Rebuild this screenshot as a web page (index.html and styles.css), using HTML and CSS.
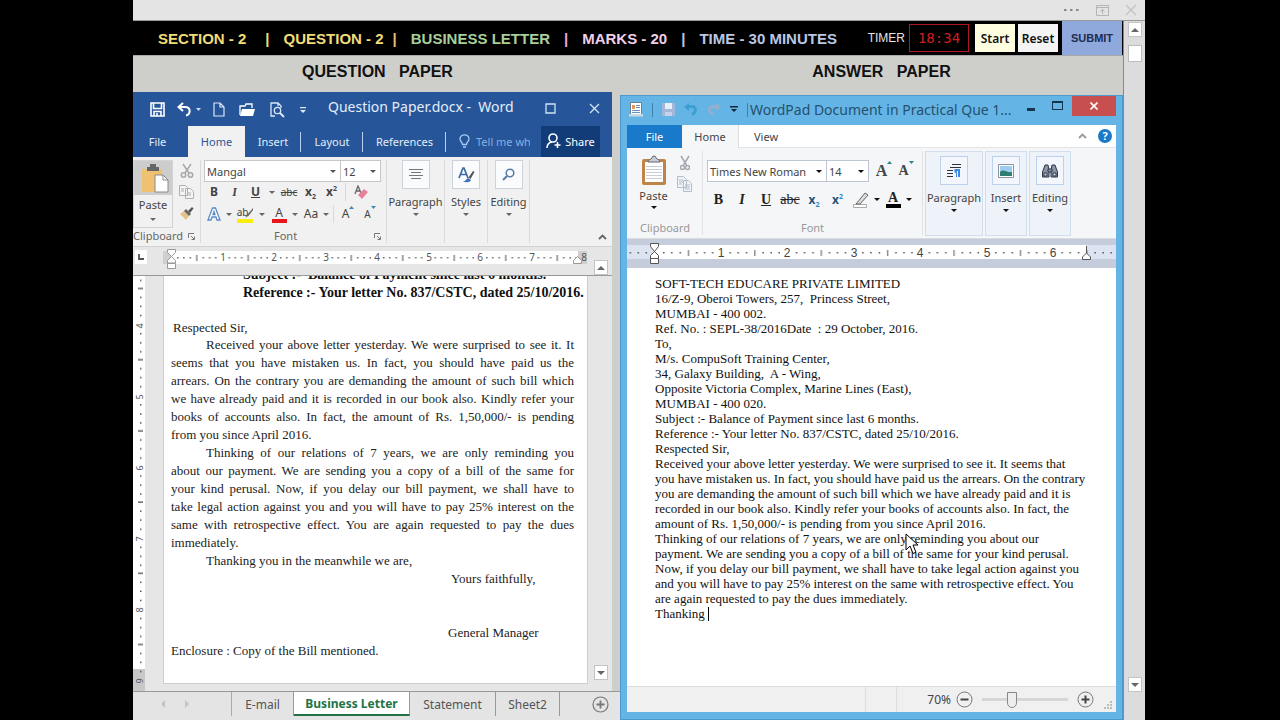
FILE: index.html
```html
<!DOCTYPE html>
<html lang="en">
<head>
<meta charset="utf-8">
<title>Question Paper and Answer Paper</title>
<link rel="stylesheet" href="styles.css">
</head>
<body>
<svg class="defs" width="0" height="0" aria-hidden="true">
  <defs>
    <pattern id="wordTicks" x="0" y="0" width="51.5" height="13" patternUnits="userSpaceOnUse">
      <path d="M6 6h1.5v1.5h-1.5zM12 6h1.5v1.5h-1.5zM18.5 6h1.5v1.5h-1.5zM31.5 6h1.5v1.5h-1.5zM38 6h1.5v1.5h-1.5zM44 6h1.5v1.5h-1.5z" fill="#666"/>
      <path d="M25 4h1.5v6h-1.5z" fill="#888"/>
    </pattern>
    <pattern id="sideTicks" x="0" y="48" width="12" height="71.2" patternUnits="userSpaceOnUse">
      <path d="M7 9h1.5v1.5h-1.5zM7 18h1.5v1.5h-1.5zM7 27h1.5v1.5h-1.5zM7 44h1.5v1.5h-1.5zM7 53h1.5v1.5h-1.5zM7 62h1.5v1.5h-1.5z" fill="#555"/>
      <path d="M5 35h5v1.5h-5z" fill="#666"/>
    </pattern>
    <pattern id="padTicks" x="28" y="0" width="66.4" height="13" patternUnits="userSpaceOnUse">
      <path d="M8 6h1.5v1.5h-1.5zM16 6h1.5v1.5h-1.5zM24.500 6h1.500v1.500h-1.500zM41 6h1.500v1.500h-1.500zM49 6h1.500v1.500h-1.500zM57 6h1.500v1.500h-1.500z" fill="#555"/>
      <path d="M33 4h1v6h-1z" fill="#555"/>
    </pattern>
  </defs>
</svg>
<div class="stage">
  <div class="topstrip">
    <svg width="16" height="4" viewBox="0 0 16 4"><path d="M0 1h2.500v2h-2.500zM6 1h2.500v2h-2.500zM12 1h2.500v2h-2.500z" fill="#888"/></svg>
    <svg width="13" height="11" viewBox="0 0 13 11" fill="none" stroke="#b5b5b5"><path d="M.5.5h12v10h-12zM.5 2.500h12M6.500 9V4.500M4.500 6.500l2-2 2 2"/></svg>
    <svg width="12" height="12" viewBox="0 0 12 12" fill="none" stroke="#c2c2c2" stroke-width="1.300"><path d="M1 1l10 10M11 1L1 11"/></svg>
  </div>
  <div class="shell">
    <main class="exam">
      <header class="exambar">
        <div class="facts">
          <span class="yellow">SECTION - 2</span><span class="yellow wide">|</span>
          <span class="yellow">QUESTION - 2</span><span class="orange near">|</span>
          <span class="green">BUSINESS LETTER</span><span class="pink">|</span>
          <span class="rose">MARKS - 20</span><span class="steel">|</span>
          <span class="steel">TIME - 30 MINUTES</span>
        </div>
        <span class="timerlabel">TIMER</span>
        <output class="timer">18:34</output>
        <button class="start">Start</button>
        <button class="reset">Reset</button>
        <button class="submit">SUBMIT</button>
      </header>
      <div class="headings"><h2>QUESTION &nbsp; PAPER</h2><h2>ANSWER &nbsp; PAPER</h2></div>
      <div class="papers">
        <section class="left">
          <div class="word">
            <div class="wtitle">
              <div class="wquick">
                <button aria-label="Save"><svg width="15" height="15" viewBox="0 0 15 15" fill="none" stroke="#fff" stroke-width="1.600"><path d="M1 1h13v13H1zM3.500 1v5.500h8V1M4 14V9.500h7V14M7 11v3"/></svg></button>
                <button aria-label="Undo"><svg width="24" height="15" viewBox="0 0 24 15" fill="none" stroke="#fff" stroke-width="2"><path d="M6 1L1.500 5 6 9M2 5h6c6 0 6 7 1 8.500"/><path d="M19 6h5l-2.500 3z" fill="#cfdcf0" stroke="none"/></svg></button>
                <button aria-label="New"><svg width="12" height="15" viewBox="0 0 12 15" fill="none" stroke="#dbe8f8" stroke-width="1.200"><path d="M1 1h6l4 4v9H1zM7 1v4h4"/></svg></button>
                <button aria-label="Open"><svg width="17" height="14" viewBox="0 0 17 14"><path d="M1 12V3h5l1-2h6v4" fill="none" stroke="#fff" stroke-width="1.300"/><path d="M3 6h13l-2 7H1z" fill="#fff"/></svg></button>
                <button aria-label="Print preview"><svg width="15" height="16" viewBox="0 0 15 16" fill="none" stroke="#dbe8f8" stroke-width="1.300"><path d="M5 14H1V1h7l3 3v2M8 1v3"/><circle cx="7.500" cy="8.500" r="3.200"/><path d="M10 11l4 4" stroke-width="2"/></svg></button>
                <button aria-label="Customize"><svg width="6" height="8" viewBox="0 0 6 8" fill="#dbe8f8"><path d="M0 1h6v1.300H0zM0 4h6L3 7z"/></svg></button>
              </div>
              <span class="wname">Question Paper.docx - &nbsp;Word</span>
              <div class="wctl">
                <button aria-label="Maximize"><svg width="11" height="11" viewBox="0 0 11 11"><path d="M1 1h9v9H1z" fill="none" stroke="#cfe2f8" stroke-width="1.300"/></svg></button>
                <button aria-label="Close"><svg width="11" height="11" viewBox="0 0 11 11"><path d="M1 1l9 9M10 1l-9 9" stroke="#d5e4f5" stroke-width="1.300"/></svg></button>
              </div>
            </div>
            <nav class="wtabs">
              <button class="t1">File</button><button class="t2">Home</button><button class="t3">Insert</button><button class="t4">Layout</button><button class="t5">References</button>
              <label class="tell"><svg width="11" height="15" viewBox="0 0 11 15" fill="none" stroke="#a9cdf3" stroke-width="1.300"><path d="M3.500 10.500C3.500 8 1 7.500 1 5a4.500 4.200 0 0 1 9 0c0 2.500-2.500 3-2.500 5.500zM4 13h3"/></svg><input value="Tell me what you want to do" aria-label="Tell me"></label>
              <button class="share"><svg width="15" height="16" viewBox="0 0 15 16" fill="none" stroke="#fff" stroke-width="1.600"><circle cx="7" cy="5" r="4"/><path d="M1 15c0-3 2-5.500 5-6M11.500 9v6M8.500 12h6"/></svg>Share</button>
            </nav>
            <div class="wribbon">
              <div class="wgroup clip">
                <div class="cliprow">
                  <button class="wpaste"><span class="pastetop"><svg width="28" height="31" viewBox="0 0 28 31"><path d="M1 6h20v23H1z" fill="#eec271"/><path d="M6 4h3V1h6v3h3v4H6z" fill="#666"/><path d="M14 12h8l5 5v12H14z" fill="#fff" stroke="#8a8a8a"/><path d="M22 12v5h5" fill="none" stroke="#8a8a8a"/></svg></span><span>Paste</span><i class="car"></i></button>
                  <div class="clipcol">
                    <button aria-label="Cut"><svg width="14" height="15" viewBox="0 0 14 15" fill="none" stroke="#a8a8a8" stroke-width="1.500"><path d="M3 1l6 9M11 1L5 10"/><circle cx="3.500" cy="12" r="2.200"/><circle cx="10.500" cy="12" r="2.200"/></svg></button>
                    <button aria-label="Copy"><svg width="15" height="14" viewBox="0 0 15 14" fill="#f4f4f4" stroke="#b0b0b0"><path d="M.5.5h6l2 2v8h-8zM6.500 3.500h5l3 3v7h-8zM2 4h3M2 6h3M8 8h4M8 10h4"/></svg></button>
                    <button aria-label="Format painter"><svg width="15" height="14" viewBox="0 0 15 14"><path d="M1 8l4-3 5 5-3 4z" fill="#e6c388"/><path d="M5 5l2-2 5 5-2 2z" fill="#666"/><path d="M9 5l4-4 1.500 1.500L11 7z" fill="#555"/></svg></button>
                  </div>
                </div>
                <div class="glabel">Clipboard<svg width="7" height="7" viewBox="0 0 7 7" fill="none" stroke="#777"><path d="M.5 5V.5H6M3 3l3 3M6.500 3.500v3h-3"/></svg></div>
              </div>
              <div class="wgroup fontg">
                <div class="combos"><span class="combo grow"><select aria-label="Font"><option>Mangal</option></select></span><span class="combo size"><select aria-label="Font size"><option>12</option></select></span></div>
                <div class="tools">
                  <button class="w20"><b>B</b></button><button class="w21"><b><em class="ser">I</em></b></button><button class="w21"><b><u>U</u></b></button><i class="car w12"></i><button class="w22 small"><s>abc</s></button><button class="w21"><b>x<sub>2</sub></b></button><button class="w21"><b>x<sup>2</sup></b></button><i class="vbar"></i>
                  <button class="w24" aria-label="Clear formatting"><svg width="15" height="15" viewBox="0 0 15 15"><path d="M1 9L4 1l3 7M2 6h4" fill="none" stroke="#666" stroke-width="1.300"/><path d="M4 10l6-6 4 3-6 7z" fill="#e8829a"/></svg></button>
                </div>
                <div class="tools">
                  <button class="w20" aria-label="Text effects"><svg width="14" height="14" viewBox="0 0 14 14" fill="#fff" stroke="#5c8cc8" stroke-width="1.300"><path d="M1 13L5.500 1h3L13 13h-3l-1-3H5l-1 3zM6 7.500h2L7 4.500z"/></svg></button><i class="car w10"></i>
                  <button class="w22 hilite" aria-label="Highlight"><span>ab</span><svg width="9" height="11" viewBox="0 0 9 11"><path d="M9 1L3 8l-2 2.500L4.500 9 9 3z" fill="#666"/></svg></button><i class="car w12"></i>
                  <button class="w22 fcol" aria-label="Font color"><span>A</span></button><i class="car w10"></i><button class="w22">Aa</button><i class="car w8"></i><i class="vbar"></i>
                  <button class="w22">A<svg class="tip" width="5" height="3" viewBox="0 0 5 3"><path d="M0 3h5L2.500 0z" fill="#48a"/></svg></button><button class="w22 small">A<svg class="tip" width="5" height="3" viewBox="0 0 5 3"><path d="M0 0h5L2.500 3z" fill="#48a"/></svg></button>
                </div>
                <div class="glabel">Font<svg width="7" height="7" viewBox="0 0 7 7" fill="none" stroke="#777"><path d="M.5 5V.5H6M3 3l3 3M6.500 3.500v3h-3"/></svg></div>
              </div>
              <button class="wgroup big g58"><span class="ibox"><svg width="14" height="11" viewBox="0 0 14 11"><path d="M0 .5h14M2 3.500h10M0 6.500h14M2 9.500h10" stroke="#777"/></svg></span>Paragraph<i class="car"></i></button>
              <button class="wgroup big g43"><span class="ibox"><svg width="17" height="16" viewBox="0 0 17 16"><path d="M1 11L5 1h1l4 10M3 7.500h5" fill="none" stroke="#3c68a4" stroke-width="1.700"/><path d="M15 4l1.500 1-4 7-2-1.500z" fill="#555"/><path d="M10 11l3 2c-1 3-5 2-8 2 3-1 3-3 5-4z" fill="#3c72bc"/></svg></span>Styles<i class="car"></i></button>
              <button class="wgroup big g42"><span class="ibox"><svg width="13" height="13" viewBox="0 0 13 13" fill="none" stroke="#557aa8" stroke-width="1.500"><circle cx="8" cy="5" r="3.800"/><path d="M5 8l-4 4" stroke-width="2"/></svg></span>Editing<i class="car"></i></button>
              <button class="collapse" aria-label="Collapse ribbon"><svg width="9" height="6" viewBox="0 0 9 6"><path d="M1 5l3.500-3.500L8 5" fill="none" stroke="#666" stroke-width="1.800"/></svg></button>
            </div>
            <div class="wruler">
              <span class="tabsel"><svg width="6" height="6" viewBox="0 0 6 6"><path d="M1 0v5h5" fill="none" stroke="#555" stroke-width="1.800"/></svg></span>
              <svg class="wscale" height="28" role="img" aria-label="Ruler">
                <rect x="0" y="4" width="424" height="13" fill="#cfcfcf"/><rect x="8" y="4" width="407" height="13" fill="#fff"/>
                <svg x="8" y="4" width="405" height="13"><rect width="405" height="13" fill="url(#wordTicks)"/></svg>
                <g class="nums"><text x="60" y="14">1</text><text x="111" y="14">2</text><text x="163" y="14">3</text><text x="214" y="14">4</text><text x="266" y="14">5</text><text x="317" y="14">6</text><text x="369" y="14">7</text><text x="421" y="14">8</text></g>
                <path d="M4.500 2.500h8v3l-4 4-4-4zM4.500 16v-2.500l4-4 4 4V16zM4.500 16.500h8v5h-8zM410.500 16.500v-3l4-4 4 4v3z" fill="#fff" stroke="#999"/>
              </svg>
              <button class="sbtn up" aria-label="Scroll up"></button>
            </div>
            <div class="wbody">
              <svg class="side" width="12" role="img" aria-label="Vertical ruler"><rect width="12" height="100%" fill="#fff"/><rect y="393" width="12" height="24" fill="#c8c8c8"/><rect width="12" height="407" fill="url(#sideTicks)"/>
                <g class="nums vert"><text transform="translate(10 50) rotate(-90)">4</text><text transform="translate(10 121) rotate(-90)">5</text><text transform="translate(10 192) rotate(-90)">6</text><text transform="translate(10 263) rotate(-90)">7</text><text transform="translate(10 334) rotate(-90)">8</text><text transform="translate(10 405) rotate(-90)">9</text></g></svg>
              <article class="page">
                <p class="ref">Subject :- &nbsp;Balance of Payment since last 6 months.</p>
                <p class="ref">Reference :- Your letter No. 837/CSTC, dated 25/10/2016.</p>
                <p class="resp">Respected Sir,</p>
                <p class="para">Received your above letter yesterday. We were surprised to see it. It<br>seems that you have mistaken us. In fact, you should have paid us the<br>arrears. On the contrary you are demanding the amount of such bill which<br>we have already paid and it is recorded in our book also. Kindly refer your<br>books of accounts also. In fact, the amount of Rs. 1,50,000/- is pending<br><span class="last">from you since April 2016.</span></p>
                <p class="para">Thinking of our relations of 7 years, we are only reminding you<br>about our payment. We are sending you a copy of a bill of the same for<br>your kind perusal. Now, if you delay our bill payment, we shall have to<br>take legal action against you and you will have to pay 25% interest on the<br>same with retrospective effect. You are again requested to pay the dues<br><span class="last">immediately.</span></p>
                <p class="thanks">Thanking you in the meanwhile we are,</p>
                <p class="yours">Yours faithfully,</p>
                <p class="gm">General Manager</p>
                <p>Enclosure : Copy of the Bill mentioned.</p>
              </article>
              <div class="wscroll"><button class="sbtn down" aria-label="Scroll down"></button></div>
            </div>
          </div>
          <nav class="sheets">
            <span class="arrows"><button class="al" aria-label="Previous sheet"></button><button class="ar" aria-label="Next sheet"></button></span>
            <button class="s1">E-mail</button><button class="s2">Business Letter</button><button class="s3">Statement</button><button class="s4">Sheet2</button>
            <button class="plus" aria-label="New sheet"><svg width="17" height="17" viewBox="0 0 17 17" fill="none" stroke="#777"><circle cx="8.500" cy="8.500" r="7.500" stroke-width="1.200"/><path d="M8.500 4.500v8M4.500 8.500h8" stroke-width="1.800"/></svg></button>
          </nav>
        </section>
        <section class="pad">
          <div class="ptitle">
            <svg width="14" height="15" viewBox="0 0 14 15"><path d="M1.500.5h11v12h-11z" fill="#fff" stroke="#68829a"/><path d="M3 3h3v4H3z" fill="#e09a54"/><path d="M7 3.500h4M7 5.500h4M3 8.500h8M3 10.500h8" stroke="#6a90c0"/><path d="M0 12h14v2.500H0z" fill="#c9d9e4"/></svg>
            <i class="pline"></i>
            <button aria-label="Save"><svg width="13" height="14" viewBox="0 0 13 14"><path d="M0 0h13v13H0z" fill="#a4b7d6"/><path d="M3 0h7v6H3z" fill="#e8eefa"/><path d="M3 9h7v4H3z" fill="#c6d2e8"/></svg></button>
            <button aria-label="Undo"><svg width="14" height="13" viewBox="0 0 14 13" fill="none" stroke="#3b9fd4" stroke-width="3"><path d="M3 3.500h5c5 0 4 6 0 8"/><path d="M5 0v8L0 4z" fill="#3b9fd4" stroke="none"/></svg></button>
            <button aria-label="Redo"><svg width="14" height="13" viewBox="0 0 14 13" fill="none" stroke="#93afcd" stroke-width="3"><path d="M11 3.500H6c-5 0-4 6 0 8"/><path d="M9 0v8l5-4z" fill="#93afcd" stroke="none"/></svg></button>
            <button aria-label="Customize"><svg width="8" height="7" viewBox="0 0 8 7" fill="#10283c"><path d="M0 0h8v1.500H0zM1 3h6L4 6z"/></svg></button>
            <i class="pline"></i>
            <span class="pname">WordPad Document in Practical Que 1...</span>
            <button class="pmin" aria-label="Minimize"></button><button class="pmax" aria-label="Maximize"></button>
            <button class="pclose" aria-label="Close"><svg width="8" height="8" viewBox="0 0 8 8"><path d="M.5.5l7 7M7.500.5l-7 7" stroke="#fff" stroke-width="1.600"/></svg></button>
          </div>
          <div class="pinner">
            <nav class="ptabs"><button class="pfile">File</button><button class="phome">Home</button><button class="pview">View</button>
              <button class="pcol" aria-label="Collapse ribbon"><svg width="9" height="6" viewBox="0 0 9 6"><path d="M1 5l3.500-3.500L8 5" fill="none" stroke="#999" stroke-width="1.800"/></svg></button><button class="help">?</button></nav>
            <div class="pribbon">
              <div class="pclip">
                <div class="pcliprow">
                  <button class="ppaste"><svg width="26" height="31" viewBox="0 0 26 31"><rect x="1" y="4" width="24" height="26" rx="2" fill="#bd8547"/><path d="M4 7h18v20H4z" fill="#fff"/><path d="M5 11.500h16M5 14.500h16M5 17.500h16M5 20.500h16M5 23.500h16" stroke="#c7ccd6"/><path d="M7 7c0-3 3-2 4-4a2 2 0 0 1 4 0c1 2 4 1 4 4z" fill="#c8ced6" stroke="#667"/></svg><span>Paste</span><i class="car dark"></i></button>
                  <div class="pclipcol"><button aria-label="Cut"><svg width="10" height="16" viewBox="0 0 10 16" fill="none" stroke="#a5aab0" stroke-width="1.500"><path d="M1 1l5.500 9M9 1L3.500 10"/><circle cx="2.500" cy="12.500" r="2"/><circle cx="7.500" cy="12.500" r="2"/></svg></button><button aria-label="Copy"><svg width="15" height="16" viewBox="0 0 15 16" fill="#f0f3f8" stroke="#b4bccb"><path d="M.5.5h6l3 3v8h-9zM6.500 4.500h5l3 3v8h-8zM2 4h4M2 6h4M2 8h3M8 9h5M8 11h5M8 13h5"/></svg></button></div>
                </div>
                <div class="plabel">Clipboard</div>
              </div>
              <div class="pfont">
                <div class="combos"><span class="combo pf"><select aria-label="Font family"><option>Times New Roman</option></select></span><span class="combo ps"><select aria-label="Font size"><option>14</option></select></span>
                  <button class="ser w24 grown"><b>A</b><svg class="tip" width="5" height="3" viewBox="0 0 5 3"><path d="M0 3h5L2.500 0z" fill="#288"/></svg></button><button class="ser w20"><b>A</b><svg class="tip" width="5" height="3" viewBox="0 0 5 3"><path d="M0 0h5L2.500 3z" fill="#288"/></svg></button></div>
                <div class="tools ptools">
                  <button class="w23 ser"><b>B</b></button><button class="w24 ser"><b><em>I</em></b></button><button class="w24 ser"><b><u>U</u></b></button><button class="w24 ser"><s>abc</s></button><button class="w24 blue"><b>x<sub>2</sub></b></button><button class="w23 blue"><b>x<sup>2</sup></b></button>
                  <button class="w23" aria-label="Highlight"><svg width="16" height="16" viewBox="0 0 16 16"><path d="M.5 12.500h13v3H.5z" fill="#fff" stroke="#aaa"/><path d="M3 12L12 1l3 2-8 9z" fill="#ddd" stroke="#666"/></svg></button><i class="car dark w10"></i>
                  <button class="w22 fcol black ser" aria-label="Text color"><span><b>A</b></span></button><i class="car dark w10"></i>
                </div>
                <div class="plabel">Font</div>
              </div>
              <button class="pbig p57"><span class="ibox"><svg width="14" height="14" viewBox="0 0 14 14"><path d="M5 .5h9M3 3.500h11M0 6.500h6M0 9.500h6M0 12.500h6" stroke="#333"/><path d="M8 5h5v8h-2V7h-1v6H9v-4c-2 0-2-4-1-4z" fill="#3c8ae0"/></svg></span>Paragraph<i class="car dark"></i></button>
              <button class="pbig p41"><span class="ibox"><svg width="16" height="14" viewBox="0 0 16 14"><path d="M.5.5h15v13H.5z" fill="#fff" stroke="#8794a2"/><path d="M2 2h12v10H2z" fill="#9ccdf0"/><path d="M2 8c4-4 6 1 12 0v4H2z" fill="#2f7f70"/></svg></span>Insert<i class="car dark"></i></button>
              <button class="pbig p41"><span class="ibox"><svg width="16" height="14" viewBox="0 0 16 14" fill="#8a94a8" stroke="#2e3848"><path d="M3 1h3l1 5v7H.5V8zM13 1h-3L9 6v7h6.500V8z"/><path d="M6 5h4v3H6z"/><path d="M2 9h3v3H2zM11 9h3v3h-3z" fill="#d4dcea"/></svg></span>Editing<i class="car dark"></i></button>
            </div>
            <svg class="pruler" height="29" role="img" aria-label="Ruler">
              <rect width="100%" height="29" fill="#c5cddc"/><rect y="6" width="100%" height="14" fill="#dce4f1"/><rect x="28" y="6" width="431" height="14" fill="#fff"/>
              <svg x="0" y="7" width="100%" height="13"><rect width="100%" height="13" fill="url(#padTicks)"/></svg>
              <g class="pnums"><text x="94" y="18">1</text><text x="160" y="18">2</text><text x="227" y="18">3</text><text x="293" y="18">4</text><text x="360" y="18">5</text><text x="426" y="18">6</text></g>
              <path d="M23.500 4.500h8v3l-4 5 4 4v3h-8v-3l4-4-4-5zM23.500 19.500h8v5h-8zM459.500 7v7M455.500 20.500v-2.500l4-4 4 4v2.500z" fill="#fff" stroke="#555"/>
            </svg>
            <div class="pdoc">
              <div class="answer" contenteditable="true" spellcheck="false" role="textbox" aria-label="Answer" aria-multiline="true">SOFT-TECH EDUCARE PRIVATE LIMITED<br>16/Z-9, Oberoi Towers, 257,&nbsp; Princess Street,<br>MUMBAI - 400 002.<br>Ref. No. : SEPL-38/2016Date&nbsp; : 29 October, 2016.<br>To,<br>M/s. CompuSoft Training Center,<br>34, Galaxy Building,&nbsp; A - Wing,<br>Opposite Victoria Complex, Marine Lines (East),<br>MUMBAI - 400 020.<br>Subject :- Balance of Payment since last 6 months.<br>Reference :- Your letter No. 837/CSTC, dated 25/10/2016.<br>Respected Sir,<br>Received your above letter yesterday. We were surprised to see it. It seems that<br>you have mistaken us. In fact, you should have paid us the arrears. On the contrary<br>you are demanding the amount of such bill which we have already paid and it is<br>recorded in our book also. Kindly refer your books of accounts also. In fact, the<br>amount of Rs. 1,50,000/- is pending from you since April 2016.<br>Thinking of our relations of 7 years, we are only reminding you about our<br>payment. We are sending you a copy of a bill of the same for your kind perusal.<br>Now, if you delay our bill payment, we shall have to take legal action against you<br>and you will have to pay 25% interest on the same with retrospective effect. You<br>are again requested to pay the dues immediately.<br>Thanking <span class="caret"></span></div>
              <svg class="pointer" width="14" height="22" viewBox="0 0 14 22"><path d="M1 1v16l4-4 3 7.500 3-1.200L8 12h5z" fill="#fff" stroke="#000"/></svg>
            </div>
            <div class="pstatus"><i></i><i></i><label for="zoom">70%</label>
              <button aria-label="Zoom out"><svg width="17" height="17" viewBox="0 0 17 17" fill="none" stroke="#777"><circle cx="8.500" cy="8.500" r="7.500"/><path d="M4.500 8.500h8" stroke="#444" stroke-width="2"/></svg></button>
              <input id="zoom" type="range" min="0" max="100" value="33">
              <button aria-label="Zoom in"><svg width="17" height="17" viewBox="0 0 17 17" fill="none" stroke="#777"><circle cx="8.500" cy="8.500" r="7.500"/><path d="M4.500 8.500h8M8.500 4.500v8" stroke="#444" stroke-width="2"/></svg></button>
              <svg class="grip" width="9" height="9" viewBox="0 0 9 9" fill="#bbb"><path d="M6 0h2v2H6zM3 3h2v2H3zM6 3h2v2H6zM0 6h2v2H0zM3 6h2v2H3zM6 6h2v2H6z"/></svg>
            </div>
          </div>
        </section>
      </div>
    </main>
    <aside class="vscroll"><button class="sbtn up" aria-label="Scroll page up"></button><span class="thumb"></span><button class="sbtn down" aria-label="Scroll page down"></button></aside>
  </div>
</div>
</body>
</html>
```
FILE: styles.css
```css
* { box-sizing: border-box; }
body { margin: 0; padding: 0 135px 0 133px; background: #000; font: 11px "Noto Sans", "Open Sans", sans-serif; color: #444; }
button { margin: 0; padding: 0; border: 0; background: none; font: inherit; color: inherit; }
p, h2 { margin: 0; }
svg { display: block; flex: none; }
.defs { position: absolute; }
.stage { height: 100vh; display: flex; flex-direction: column; background: #e4e4e4; overflow: hidden; }
.topstrip { height: 21px; flex: none; display: flex; align-items: center; justify-content: flex-end; gap: 16px; padding-right: 8px; border-bottom: 1px solid #999; }
.shell { flex: 1; min-height: 0; display: flex; }
.exam { flex: 1; min-width: 0; display: flex; flex-direction: column; background: #cececb; }

.exambar { height: 34px; flex: none; display: flex; align-items: center; background: #000; padding-right: 1px; font-family: "Liberation Sans", sans-serif; }
.facts { flex: 1; display: flex; gap: 14px; padding-left: 25px; font-size: 15px; font-weight: bold; white-space: nowrap; }
.wide { margin-left: 5px; }
.near { margin-left: -5px; }
.yellow { color: #f1dc78; }
.orange { color: #e8bd70; }
.green { color: #a9cf98; }
.pink { color: #f0a6d8; }
.rose { color: #f0cfe8; }
.steel { color: #b9c7e4; }
.timerlabel { color: #e4e4e4; font-size: 12px; margin-right: 4px; }
.timer { width: 60px; height: 28px; border: 1px solid #b01820; color: #d01c20; font: 14px/26px "DejaVu Sans Mono", monospace; text-align: center; margin-right: 6px; }
.start, .reset { width: 40px; height: 28px; background: #fffde0; color: #111; font: 600 12px "Noto Sans", sans-serif; margin-right: 3px; }
.reset { background: #f4f4f4; margin-right: 4px; }
.submit { width: 60px; align-self: stretch; background: #8fa9dc; color: #1c2c50; font-weight: bold; font-size: 11px; }
.headings { height: 37px; flex: none; display: grid; grid-template-columns: 489px 1fr; align-items: center; text-align: center; padding-bottom: 4px; border-top: 1px solid #aaa; }
.headings h2 { font: bold 16px "Liberation Sans", sans-serif; color: #111; }
.headings h2 + h2 { padding-left: 18px; }
.papers { flex: 1; min-height: 0; display: grid; grid-template-columns: 487px 1fr; }
.left { display: flex; flex-direction: column; min-height: 0; }

.word { flex: 1; min-height: 0; margin-right: 8px; display: flex; flex-direction: column; background: #e6e6e6; }
.wtitle { height: 34px; flex: none; display: flex; align-items: center; background: #27559a; color: #e3edf8; padding: 0 12px 2px 17px; }
.wquick { display: flex; align-items: center; gap: 14px; padding-top: 3px; }
.wquick button:nth-child(2), .wquick button:nth-child(1) { margin-right: -2px; }
.wquick button:nth-child(6) { margin-left: 1px; }
.wname { font-size: 14px; margin-left: 22px; padding-bottom: 4px; flex: 1; white-space: nowrap; }
.wctl { display: flex; gap: 33px; }
.wtabs { height: 31px; flex: none; display: flex; align-items: stretch; background: #27559a; color: #e3edf8; }
.wtabs button { padding-bottom: 1px; }
.wtabs .t1 { width: 55px; padding-right: 6px; }
.wtabs .t2 { width: 57px; background: #f1f1f1; color: #2b579a; }
.t3 { width: 56px; }
.t4 { width: 62px; }
.t5 { width: 83px; }
.t3, .t4, .t5 { background: linear-gradient(#b9d0ee, #b9d0ee) right 50% / 1px 20px no-repeat; }
.tell { flex: 1; display: flex; align-items: center; gap: 6px; padding-left: 13px; min-width: 0; }
.tell input { width: 54px; border: 0; padding: 0; background: none; font: inherit; color: #88aee0; }
.share { width: 59px; margin-right: 12px; display: flex; align-items: center; justify-content: center; gap: 4px; background: #123c78; color: #fff; }

.wribbon { height: 90px; flex: none; display: flex; background: #f1f1f1; border-bottom: 1px solid #d2d2d2; }
.wgroup { border-right: 1px solid #dadada; margin: 3px 0; }
.clip { width: 68px; display: flex; flex-direction: column; }
.cliprow { flex: 1; display: flex; }
.wpaste { width: 40px; border: 1px solid #d4d4d4; display: flex; flex-direction: column; align-items: center; gap: 2px; margin-bottom: 1px; }
.pastetop { background: #cdcdcd; align-self: stretch; padding: 2px 0 1px 7px; }
.wpaste span:nth-child(2) { line-height: 16px; }
.clipcol { flex: 1; display: flex; flex-direction: column; align-items: center; gap: 7px; padding-top: 3px; }
.glabel { height: 14px; display: flex; align-items: center; justify-content: space-between; line-height: 14px; color: #666; padding-right: 5px; }
.fontg { width: 186px; display: flex; flex-direction: column; padding-left: 3px; }
.fontg .glabel { padding-left: 70px; }
.combos { display: flex; align-items: center; }
.combo { position: relative; height: 22px; border: 1px solid #c6c6c6; background: #fff; }
.combo::after { content: ""; position: absolute; right: 4px; top: 9px; border: 3px solid transparent; border-top-color: #555; pointer-events: none; }
.combo select { appearance: none; width: 100%; height: 100%; border: 0; padding: 0 0 0 2px; background: none; font: inherit; color: #444; }
.grow { width: 137px; }
.size { width: 41px; margin-left: -1px; }
.tools { display: flex; align-items: center; height: 23px; }
.fontg .tools:nth-child(2) { height: 20px; }
.fontg .tools:nth-child(3) { height: 24px; }
.fontg .glabel { margin-top: auto; }
.tools button { display: flex; justify-content: center; align-items: center; font-size: 12px; line-height: 16px; }
.tools .small { font-size: 10px; }
sub, sup { font-size: 7px; line-height: 0; }
.ser { font-family: "Liberation Serif", serif; }
.vbar { width: 1px; height: 18px; background: #d8d8d8; margin: 0 3px; }
.tip { align-self: flex-start; }
.fcol span { border-bottom: 4px solid #e8151b; width: 15px; line-height: 13px; text-align: center; }
.tools .hilite { width: 16px; margin: 0 3px; border-bottom: 4px solid #f6ee10; font-size: 10px; line-height: 13px; }
.hilite svg { margin-left: -4px; }
.black span { border-color: #000; }
.w8 { width: 8px; }
.w10 { width: 10px; }
.w12 { width: 12px; }
.w20 { width: 20px; }
.w21 { width: 21px; }
.w22 { width: 22px; }
.w23 { width: 23px; }
.w24 { width: 24px; }
.car { display: flex; justify-content: center; }
.car::before { content: ""; border: 3px solid transparent; border-top-color: #666; margin-top: 3px; }
.dark::before { border-top-color: #111; }
.big { display: flex; flex-direction: column; align-items: center; line-height: 16px; }
.ibox { width: 28px; height: 29px; border: 1px solid #ccd2da; background: #fafbfc; display: flex; align-items: center; justify-content: center; margin-bottom: 5px; }
.g58 { width: 58px; }
.g43 { width: 43px; }
.g42 { width: 42px; }
.collapse { margin: auto 5px 6px auto; }

.wruler { height: 29px; flex: none; display: flex; border-bottom: 1px solid #999; padding-left: 2px; }
.tabsel { width: 12px; height: 14px; background: #fff; margin: 3px 16px 0 0; display: flex; align-items: center; justify-content: center; }
.wscale { flex: 1; min-width: 0; overflow: visible; }
.nums { font: 10px "Noto Sans", sans-serif; fill: #555; text-anchor: middle; }
.vert { font-size: 9px; }
.sbtn { width: 14px; height: 15px; border: 1px solid #c4c4c4; background: #fff; display: flex; align-items: center; justify-content: center; flex: none; }
.up::before { content: ""; border: 4px solid transparent; border-bottom-color: #666; border-top: 0; }
.down::before { content: ""; border: 4px solid transparent; border-top-color: #666; border-bottom: 0; }
.wruler .sbtn { margin: 13px 4px 0 7px; }
.wbody { flex: 1; min-height: 0; display: flex; padding-bottom: 7px; overflow: hidden; }
.side { height: 415px; overflow: visible; }
.page { flex: 1; min-width: 0; margin-left: 18px; background: #fff; border: 1px solid #cfcfcf; border-top: 0; padding: 0 13px 0 7px; font: 13px/18px "Liberation Serif", serif; color: #222; overflow: hidden; }
.ref { font-size: 14px; font-weight: bold; padding-left: 72px; white-space: nowrap; color: #111; }
.ref:first-child { margin-top: -10px; }
.resp { margin: 17px 0 -1px 2px; }
.para { text-align: justify; text-align-last: justify; text-indent: 35px; }
.last { display: block; text-align-last: left; text-indent: 0; }
.thanks { text-indent: 35px; }
.yours { padding-left: 280px; }
.gm { padding: 36px 0 0 277px; }
.wscroll { width: 19px; margin: 0 4px 0 1px; padding: 0 0 4px 5px; display: flex; align-items: flex-end; }

.sheets { height: 29px; flex: none; display: flex; background: #e4e4e4; border-top: 1px solid #999; font-size: 12px; color: #555; }
.sheets button { margin-bottom: 4px; border-right: 1px solid #999; }
.arrows { width: 99px; display: flex; align-items: center; gap: 20px; padding-left: 24px; border-right: 1px solid #aaa; margin-bottom: 4px; }
.sheets .al, .sheets .ar { margin: 0; border: 4px solid transparent; border-right-color: #c4c4c4; }
.sheets .ar { border-color: transparent transparent transparent #c4c4c4; }
.s1 { width: 62px; }
.sheets .s2 { width: 116px; background: #fff; border-bottom: 2px solid #217346; color: #217346; font-weight: bold; }
.s3 { width: 86px; }
.s4 { width: 64px; }
.sheets .plus { border: 0; margin-left: 32px; }

.pad { margin-top: 3px; background: #64b5e6; border: 1px solid #4a9ace; padding: 0 6px 7px; display: flex; flex-direction: column; min-height: 0; min-width: 0; }
.ptitle { height: 29px; flex: none; display: flex; align-items: center; gap: 9px; padding: 0 0 2px 2px; }
.pline { width: 1px; height: 14px; background: #3c80ac; }
.pname { font-size: 14px; color: #26506c; white-space: nowrap; flex: 1; min-width: 0; margin-left: -7px; }
.pmin { width: 8px; height: 3px; background: #16384e; margin-right: 8px; }
.pmax { width: 11px; height: 9px; border: 1px solid #16384e; border-top-width: 2px; margin-bottom: 8px; }
.ptitle .pclose { width: 44px; height: 20px; background: #c84f50; align-self: flex-start; display: flex; align-items: center; justify-content: center; }
.pinner { flex: 1; min-height: 0; display: flex; flex-direction: column; background: #fff; }
.ptabs { height: 23px; flex: none; display: flex; align-items: center; border-bottom: 1px solid #e2e4e6; }
.ptabs button { height: 23px; }
.ptabs .pfile { width: 55px; background: #1979ca; color: #fff; }
.ptabs .phome { width: 57px; background: #f5f6f7; border-right: 1px solid #ddd; }
.pview { width: 54px; }
.ptabs .pcol { margin-left: auto; margin-right: 11px; }
.ptabs .help { width: 14px; height: 14px; border-radius: 7px; background: #1979ca; color: #fff; font-weight: bold; line-height: 14px; margin-right: 4px; }
.pribbon { height: 91px; flex: none; display: flex; background: #f5f6f7; border-bottom: 1px solid #dadbdc; gap: 2px; }
.pclip { width: 76px; padding: 7px 0 0 13px; margin: 3px 0; border-right: 1px solid #e0e2e4; display: flex; flex-direction: column; }
.pcliprow { display: flex; gap: 10px; flex: 1; }
.ppaste { display: flex; flex-direction: column; align-items: center; width: 27px; margin-top: -3px; }
.ppaste span { margin-top: 2px; }
.pclipcol { display: flex; flex-direction: column; gap: 5px; align-items: center; margin-top: -3px; }
.plabel { line-height: 14px; color: #999; }
.pfont { width: 218px; margin: 3px 0; padding: 9px 0 0 2px; border-right: 1px solid #e0e2e4; display: flex; flex-direction: column; }
.pfont .plabel { margin-top: auto; text-align: center; padding-right: 4px; }
.pf { width: 120px; }
.ps { width: 43px; margin-left: -1px; }
.pfont .combos button { display: flex; justify-content: center; font-size: 14px; line-height: 20px; }
.pfont .combos .grown { font-size: 16px; margin-left: 3px; }
.pfont .combo { border-color: #bcc6d4; }
.pfont .combo::after { border-top-color: #111; }
.ptools { margin-top: 6px; }
.ptools .ser { font-size: 14px; color: #222; }
.ptools .blue { color: #26517c; }
.ptools .blue sub, .ptools .blue sup { color: #2988d0; }
.pbig { display: flex; flex-direction: column; align-items: center; border: 1px solid #d0dfee; background: #eef2f9; margin: 3px 0 2px; padding-top: 4px; line-height: 16px; }
.pbig .ibox { border-color: #bcd2ea; background: #f3f7fd; }
.p57 { width: 58px; }
.p41 { width: 42px; }
.pruler { width: 100%; }
.pnums { font: 12px "Liberation Sans", sans-serif; fill: #444; text-anchor: middle; }
.pdoc { flex: 1; min-height: 0; position: relative; padding: 8px 20px 0 28px; }
.answer { font: 13px/15px "Liberation Serif", serif; color: #111; white-space: nowrap; outline: 0; }
.caret { display: inline-block; width: 1px; height: 14px; background: #000; vertical-align: -3px; }
.pointer { position: absolute; left: 278px; top: 265px; }
.pstatus { height: 26px; flex: none; display: flex; align-items: center; background: #f0f0f0; border-top: 1px solid #dcdcdc; padding-right: 3px; font-size: 12px; }
.pstatus i { width: 1px; align-self: stretch; background: #ddd; margin-left: auto; }
.pstatus i + i { margin-left: 30px; }
.pstatus label { width: 54px; text-align: right; margin-right: 5px; }
#zoom { appearance: none; width: 86px; height: 16px; margin: 0 9px; background: linear-gradient(#d6d6d6, #d6d6d6) 0 50% / 100% 3px no-repeat; }
#zoom::-webkit-slider-thumb { appearance: none; width: 10px; height: 16px; border: 1px solid #888; background: #eee; border-radius: 0 0 5px 5px; }
.grip { align-self: flex-end; margin: 0 0 2px 10px; }

.vscroll { width: 22px; background: #dcdcdc; border-left: 1px solid #888; padding: 1px 3px 28px 4px; display: flex; flex-direction: column; }
.thumb { width: 14px; height: 17px; background: #fff; border: 1px solid #bbb; margin-top: 8px; }
.vscroll .down { margin-top: auto; }
```
